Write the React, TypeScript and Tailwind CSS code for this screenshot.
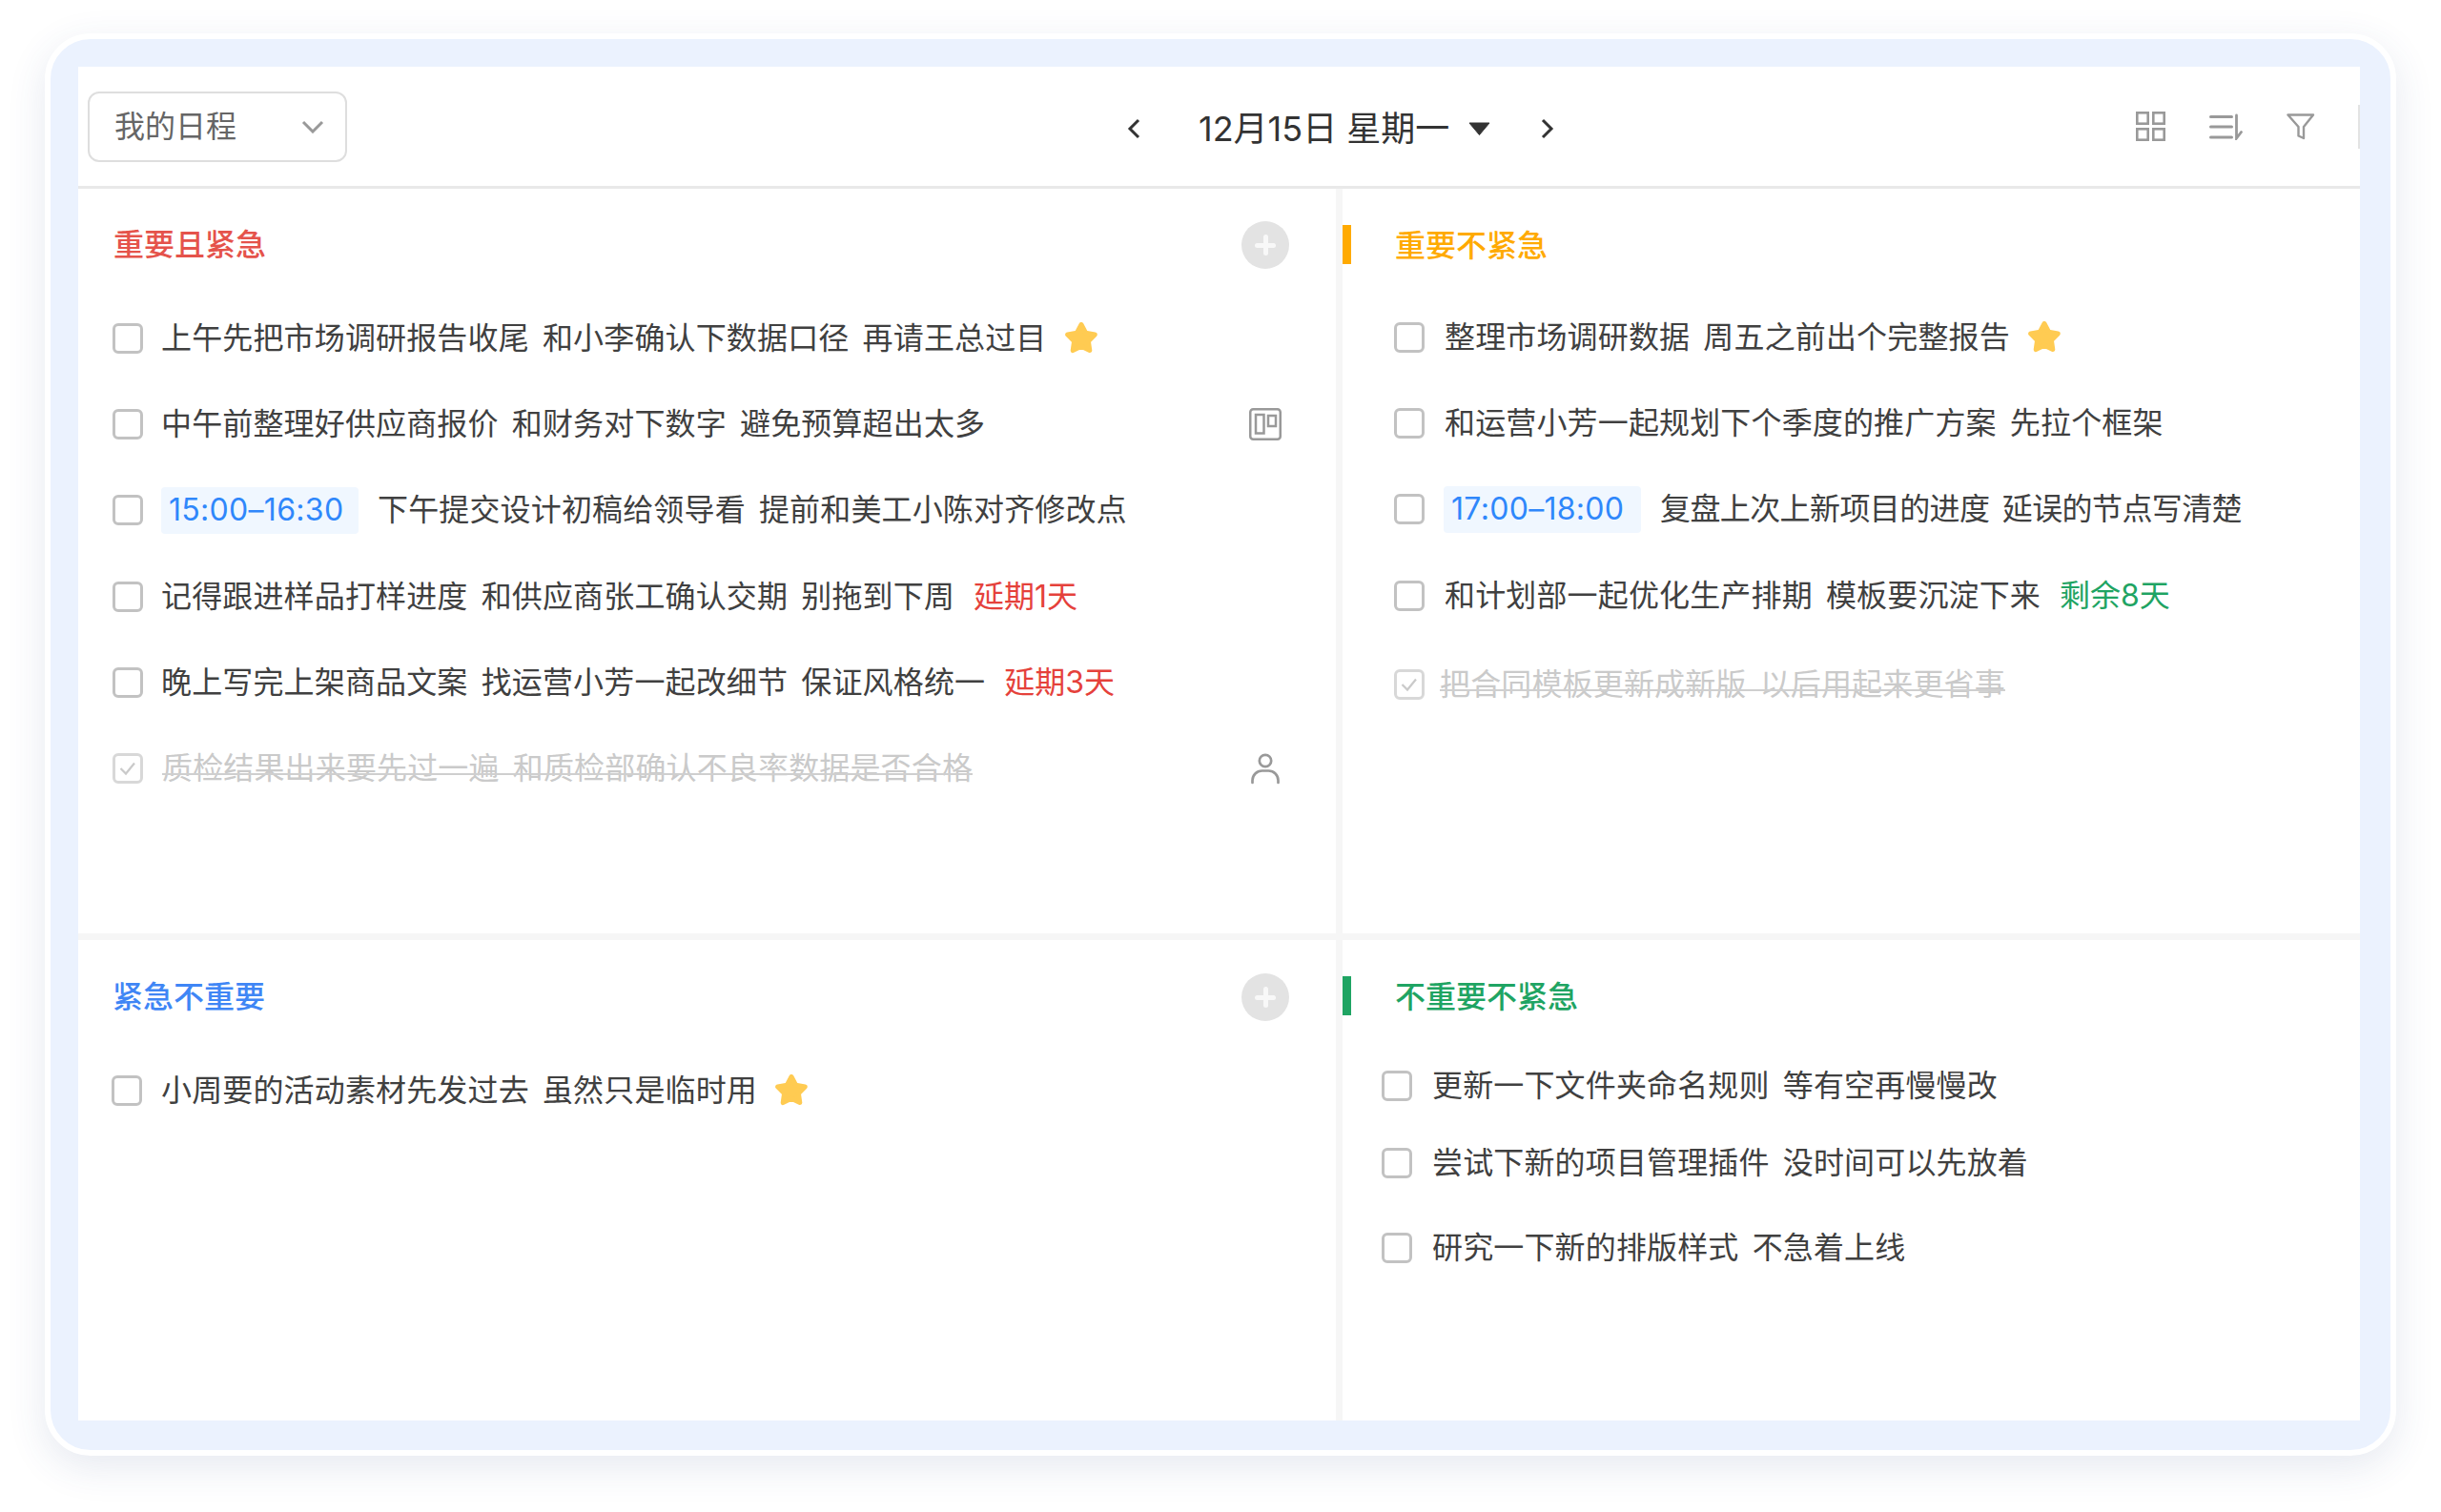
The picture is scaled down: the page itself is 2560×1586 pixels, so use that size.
import React from "react";

function Star() {
  return (
    <svg width="36" height="34" viewBox="0 1 36 34" className="shrink-0">
      <path d="M18 3.5 L22.6 12.2 L32.3 13.9 L25.4 20.9 L26.8 30.6 L18 26.3 L9.2 30.6 L10.6 20.9 L3.7 13.9 L13.4 12.2 Z" fill="#ffcb52" stroke="#ffcb52" strokeWidth="5" strokeLinejoin="round" />
    </svg>
  );
}

function Checkbox({ checked = false }: { checked?: boolean }) {
  return (
    <span className={"flex h-[32px] w-[32px] shrink-0 items-center justify-center rounded-[6px] border-[3px] bg-white " + (checked ? "border-[#d8d8d8]" : "border-[#c2c2c2]")}>
      {checked && (
        <svg width="20" height="20" viewBox="0 0 20 20" fill="none">
          <path d="M2.5 10 L8 15.5 L17 4.5" stroke="#cacaca" strokeWidth="2.2" />
        </svg>
      )}
    </span>
  );
}

function PlusButton() {
  return (
    <button className="relative ml-auto h-[50px] w-[50px] shrink-0 rounded-full bg-[#e3e3e3]">
      <span className="absolute left-[14px] top-[22.5px] h-[5px] w-[22px] rounded-full bg-[#f8f8f8]" />
      <span className="absolute left-[22.5px] top-[14px] h-[22px] w-[5px] rounded-full bg-[#f8f8f8]" />
    </button>
  );
}

function Time({ children }: { children: React.ReactNode }) {
  return (
    <span className="mr-[20px] flex h-[49px] w-[207px] items-center rounded-[4px] bg-[#f0f7ff] pl-[8px] tracking-[0.3px] text-[#2f87fb]">{children}</span>
  );
}

function Row({
  text,
  gap = "mr-[21px]",
  time,
  star,
  tag,
  tagColor,
  checked,
  right,
  tracking = "tracking-[0.15px]",
  height = "h-[90.2px]",
}: {
  text: string;
  gap?: string;
  time?: string;
  star?: boolean;
  tag?: string;
  tagColor?: string;
  checked?: boolean;
  right?: React.ReactNode;
  tracking?: string;
  height?: string;
}) {
  return (
    <div className={"flex items-center " + height}>
      <div className={gap + " flex"}>
        <Checkbox checked={checked} />
      </div>
      {time && <Time>{time}</Time>}
      {checked ? (
        <span className={"relative text-[#cacaca] " + tracking}>
          {text}
          <span className="absolute left-0 right-0 top-[calc(50%+5px)] h-[2px] bg-[#cfcfcf]" />
        </span>
      ) : (
        <span className={"text-[#404040] " + tracking}>{text}</span>
      )}
      {star && (
        <span className="ml-[18px] flex">
          <Star />
        </span>
      )}
      {tag && <span className={"ml-[20px] " + tagColor}>{tag}</span>}
      {right && <span className="ml-auto flex w-[50px] justify-center">{right}</span>}
    </div>
  );
}

function KanbanIcon() {
  return (
    <svg width="34" height="34" viewBox="0 0 34 34" fill="none" stroke="#999" strokeWidth="2.5">
      <rect x="1.25" y="1.25" width="31.5" height="31.5" rx="3" />
      <rect x="7" y="7" width="8.5" height="19.5" />
      <rect x="20" y="8" width="8" height="11" />
    </svg>
  );
}

function PersonIcon() {
  return (
    <svg width="30" height="33" viewBox="0 0 30 33" fill="none" stroke="#999" strokeWidth="2.7" strokeLinecap="round">
      <circle cx="15" cy="8" r="6.2" />
      <path d="M1.5 31 V28.5 A10 10 0 0 1 11.5 18.5 H18.5 A10 10 0 0 1 28.5 28.5 V31" />
    </svg>
  );
}

export default function App() {
  return (
    <div className="h-[1586px] w-[2560px] overflow-hidden bg-white pl-[47px] pt-[35px] font-['Inter','Noto_Sans_CJK_SC',sans-serif] text-[32px] leading-none [word-spacing:5px]">
      <div className="flex h-[1492px] w-[2466px] flex-col rounded-[48px] border-[6px] border-white bg-[#ebf2fe] pb-[31px] pl-[29px] pr-[32px] pt-[29px] shadow-[0_12px_40px_rgba(50,70,130,0.12)]">
        <div className="flex flex-1 flex-col bg-white">
          <header className="flex h-[128px] shrink-0 items-center border-b-[3px] border-[#e9e9e9] pl-[10px]">
            <div className="flex h-[74px] w-[272px] items-center justify-between rounded-[12px] border-[2.5px] border-[#dedede] pl-[26px] pr-[22px] text-[#666]">
              <span>我的日程</span>
              <svg width="24" height="14" viewBox="0 0 24 14" fill="none" stroke="#999" strokeWidth="3">
                <path d="M2 2 L12 12 L22 2" />
              </svg>
            </div>
            <div className="ml-[818px] mt-[4px] flex items-center text-[#333]">
              <svg width="14" height="22" viewBox="0 0 14 22" fill="none" stroke="#333" strokeWidth="3" className="shrink-0">
                <path d="M12 2 L3 11 L12 20" />
              </svg>
              <span className="ml-[61px] whitespace-pre text-[36px] [word-spacing:0px]">12月15日 星期一</span>
              <svg width="23" height="14" viewBox="0 0 23 14" className="ml-[20px] shrink-0">
                <path d="M1 1 H22 L11.5 13.5 Z" fill="#333" stroke="#333" strokeWidth="1" strokeLinejoin="round" />
              </svg>
              <svg width="14" height="22" viewBox="0 0 14 22" fill="none" stroke="#333" strokeWidth="3" className="ml-[53px] shrink-0">
                <path d="M2 2 L11 11 L2 20" />
              </svg>
            </div>
            <div className="ml-auto flex items-center">
              <svg width="31" height="31" viewBox="0 0 31 31" fill="none" stroke="#999" strokeWidth="2.6">
                <rect x="1.3" y="1.3" width="11.4" height="11.4" />
                <rect x="18.3" y="1.3" width="11.4" height="11.4" />
                <rect x="1.3" y="18.3" width="11.4" height="11.4" />
                <rect x="18.3" y="18.3" width="11.4" height="11.4" />
              </svg>
              <svg width="35" height="28" viewBox="0 0 35 28" fill="none" stroke="#999" strokeWidth="3" strokeLinecap="round" className="ml-[46px]">
                <path d="M1.5 3.5 H23.5 M1.5 14 H23.5 M1.5 25 H23.5" />
                <path d="M28.5 2 V26 L33.5 19.5" strokeWidth="2.8" />
              </svg>
              <svg width="30" height="28" viewBox="0 0 30 28" fill="none" stroke="#999" strokeWidth="2.4" strokeLinejoin="round" className="ml-[46px]">
                <path d="M1.5 1.5 H28 L18 14 V26 L12.5 23.5 V14 Z" />
              </svg>
              <span className="ml-[45px] h-[46px] w-[2px] bg-[#e3e3e3]" />
            </div>
          </header>

          <main className="grid flex-1 grid-cols-[1319px_1067px] grid-rows-[781px_504px] gap-[7px] bg-[#f6f6f6]">
            <section className="bg-white pl-[36px]">
              <div className="mt-[34px] flex h-[50px] items-center pr-[49px]">
                <h2 className="pl-[1px] font-medium text-[#e5534b]">重要且紧急</h2>
                <PlusButton />
              </div>
              <div className="mt-[28px] pr-[49px]">
                <Row gap="mr-[19px]" text="上午先把市场调研报告收尾 和小李确认下数据口径 再请王总过目" star />
                <Row gap="mr-[19px]" text="中午前整理好供应商报价 和财务对下数字 避免预算超出太多" right={<KanbanIcon />} />
                <Row gap="mr-[19px]" text="下午提交设计初稿给领导看 提前和美工小陈对齐修改点" time="15:00–16:30" />
                <Row gap="mr-[19px]" text="记得跟进样品打样进度 和供应商张工确认交期 别拖到下周" tag="延期1天" tagColor="text-[#e5413b]" />
                <Row gap="mr-[19px]" text="晚上写完上架商品文案 找运营小芳一起改细节 保证风格统一" tag="延期3天" tagColor="text-[#e5413b]" />
                <Row text="质检结果出来要先过一遍 和质检部确认不良率数据是否合格" checked gap="mr-[20px]" right={<PersonIcon />} />
              </div>
            </section>

            <section className="bg-white">
              <div className="mt-[38px] flex h-[41px] items-center">
                <span className="h-[41px] w-[9px] bg-[#ffaa00]" />
                <h2 className="ml-[46px] pt-[2px] font-medium text-[#ffaa00]">重要不紧急</h2>
              </div>
              <div className="mt-[32px] pl-[54px]">
                <Row text="整理市场调研数据 周五之前出个完整报告" star />
                <Row text="和运营小芳一起规划下个季度的推广方案 先拉个框架" />
                <Row text="复盘上次上新项目的进度 延误的节点写清楚" time="17:00–18:00" gap="mr-[20px]" tracking="tracking-[-0.6px]" />
                <Row text="和计划部一起优化生产排期 模板要沉淀下来" tag="剩余8天" tagColor="text-[#1fa463]" />
                <div className="mt-[3px]">
                  <Row text="把合同模板更新成新版 以后用起来更省事" checked gap="mr-[16px]" />
                </div>
              </div>
            </section>

            <section className="bg-white pl-[35px]">
              <div className="mt-[35px] flex h-[50px] items-center pr-[49px]">
                <h2 className="pl-[1px] font-medium text-[#3f86f5]">紧急不重要</h2>
                <PlusButton />
              </div>
              <div className="mt-[28px]">
                <Row gap="mr-[20px]" text="小周要的活动素材先发过去 虽然只是临时用" star />
              </div>
            </section>

            <section className="bg-white">
              <div className="mt-[38px] flex h-[41px] items-center">
                <span className="h-[41px] w-[9px] bg-[#1fa463]" />
                <h2 className="ml-[46px] pt-[2px] font-medium text-[#1fa463]">不重要不紧急</h2>
              </div>
              <div className="mt-[33px] pl-[41px]">
                <Row text="更新一下文件夹命名规则 等有空再慢慢改" height="h-[81px]" />
                <Row text="尝试下新的项目管理插件 没时间可以先放着" height="h-[81px]" />
                <div className="mt-[8px]">
                  <Row text="研究一下新的排版样式 不急着上线" height="h-[81px]" />
                </div>
              </div>
            </section>
          </main>
        </div>
      </div>
    </div>
  );
}
